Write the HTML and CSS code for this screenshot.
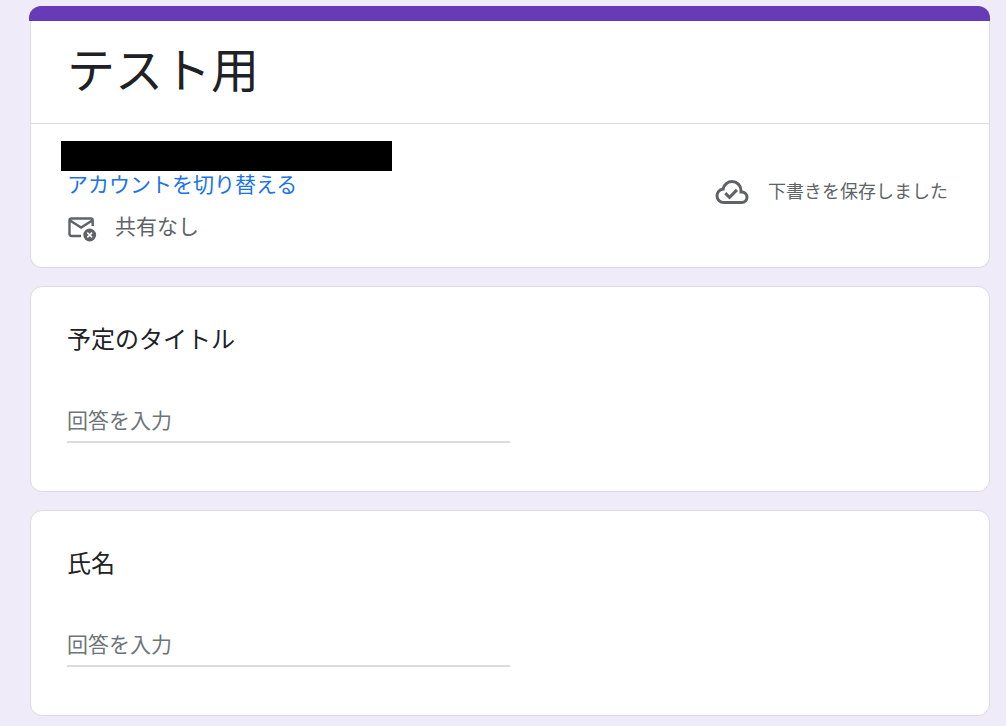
FILE: index.html
```
<!DOCTYPE html>
<html lang="ja">

<head>
    <meta charset="UTF-8">
    <meta name="viewport" content="width=device-width, initial-scale=1.0">
    <title>テスト用</title>
    <link rel="stylesheet" href="styles.css">
</head>

<body>
    <form class="container">
        <div class="card form-head">
            <div class="top-bar"></div>
            <h1>テスト用</h1>
            <div class="account">
                <div class="account-info">
                    <div class="email"></div>
                    <a href="#">アカウントを切り替える</a>
                    <div class="share">
                        <svg width="30" height="30" viewBox="0 0 30 30" fill="none">
                            <path d="M14 24H4.5Q2.5 24 2.5 22V8.5Q2.5 6.500 4.5 6.500H23.7Q25.7 6.500 25.7 8.5V14M3 8.5L14.1 15.5L25.2 8.5" stroke="#5f6368" stroke-width="2.4" />
                            <circle cx="22.7" cy="23" r="6.4" fill="#5f6368" />
                            <path d="M20.3 20.6L25.1 25.4M25.1 20.6L20.3 25.4" stroke="#fff" stroke-width="1.5" />
                        </svg>
                        <span>共有なし</span>
                    </div>
                </div>
                <div class="status">
                    <svg width="36" height="36" viewBox="0 -960 960 960" fill="#5f6368">
                        <path d="m414-280 226-226-58-58-169 169-84-84-57 57 142 142ZM260-160q-91 0-155.5-63T40-377q0-78 47-139t123-78q25-92 100-149t170-57q117 0 198.5 81.5T760-520q69 8 114.5 59.5T920-340q0 75-52.5 127.5T740-160H260Zm0-80h480q42 0 71-29t29-71q0-42-29-71t-71-29h-60v-80q0-83-58.5-141.5T480-720q-83 0-141.5 58.5T280-520h-20q-58 0-99 41t-41 99q0 58 41 99t99 41Z" />
                    </svg>
                    <span>下書きを保存しました</span>
                </div>
            </div>
        </div>

        <div class="card question">
            <label for="plan-title">予定のタイトル</label>
            <input type="text" id="plan-title" placeholder="回答を入力">
        </div>

        <div class="card question">
            <label for="name">氏名</label>
            <input type="text" id="name" placeholder="回答を入力">
        </div>
    </form>
</body>

</html>
```
FILE: styles.css
```
* {
    margin: 0;
    padding: 0;
    box-sizing: border-box;
    text-decoration: none;
    font-family: "Noto Sans CJK JP", sans-serif;
}

body {
    background-color: #f0ebf8;
}

.container {
    display: grid;
    gap: 18px;
    padding: 6px 16px 10px 30px;
}

.card {
    background-color: white;
    border: 1px solid #dadce0;
    border-radius: 12px;
}

.form-head {
    border-top: none;
}

.top-bar {
    height: 15px;
    margin: 0 -1px 0 -2px;
    background-color: #673ab7;
    border-radius: 12px 12px 0 0;
}

.form-head h1 {
    padding: 16px 36px 26px;
    font-size: 48px;
    line-height: 60px;
    font-weight: 400;
    color: #202124;
}

.account {
    display: flex;
    justify-content: space-between;
    align-items: center;
    padding: 17px 36px 24px;
    border-top: 1px solid #dadce0;
    color: #5f6368;
}

.account-info {
    padding-bottom: 2px;
    font-size: 21px;
    line-height: 24px;
}

.email {
    width: 331px;
    height: 30px;
    margin-left: -6px;
    background-color: black;
}

.account-info a {
    display: block;
    width: fit-content;
    color: #1a73e8;
}

.share {
    display: flex;
    align-items: center;
    gap: 18px;
    height: 28px;
    margin-top: 18px;
}

.status {
    display: flex;
    align-items: center;
    gap: 18px;
    font-size: 18px;
    line-height: 24px;
}

.share span,
.status span {
    padding-bottom: 4px;
}

.status span {
    min-width: 185px;
}

.question {
    padding: 33px 36px 48px;
}

.question label {
    display: block;
    width: fit-content;
    margin-bottom: 45px;
    font-size: 24px;
    line-height: 36px;
    color: #202124;
}

.question input {
    display: block;
    width: 50%;
    height: 42px;
    padding-bottom: 4px;
    font-size: 21px;
    color: #202124;
    background-color: white;
    border: none;
    border-bottom: 2px solid #dadce0;
    outline: none;
}

.question input:focus {
    border-bottom-color: #673ab7;
}

.question input::placeholder {
    color: #70757a;
}
```
